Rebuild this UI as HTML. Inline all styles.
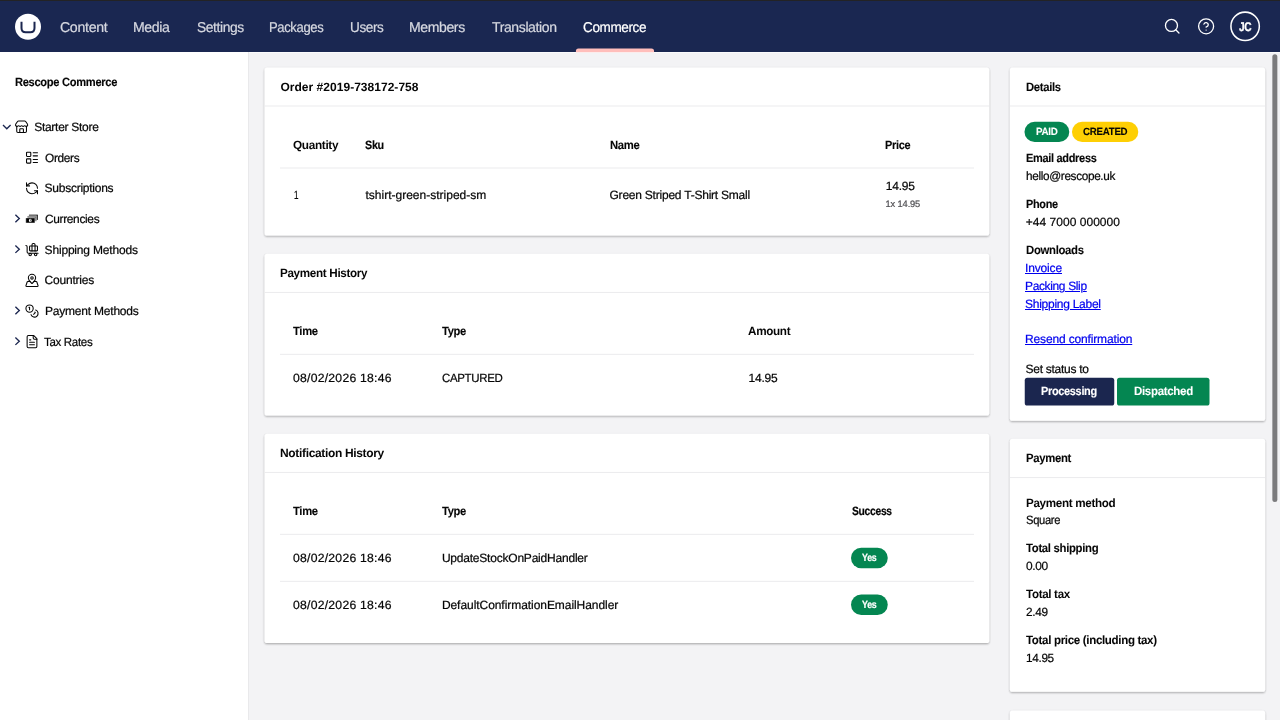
<!DOCTYPE html>
<html lang="en">
<head>
<meta charset="utf-8">
<title>Order #2019-738172-758 - Rescope Commerce</title>
<style>
*{box-sizing:border-box;margin:0;padding:0}
html,body{width:1280px;height:720px;overflow:hidden;background:#f3f3f5;font-family:"Liberation Sans",sans-serif;color:#060606}
body{position:relative}
.t{position:absolute;transform-origin:0 50%;white-space:nowrap;line-height:20px;height:20px;font-size:12px;color:#060606;text-decoration:none}
.abs{position:absolute}
#topline{left:0;top:0;width:1280px;height:1px;background:#232325}
#header{left:0;top:1px;width:1280px;height:51px;background:#1a2751}
#sidebar{left:0;top:52px;width:249px;height:668px;background:#fff;border-right:1px solid #e9e9eb}
.ic{fill:none;stroke-linecap:round;stroke-linejoin:round}
.chev{fill:none;stroke:#1b264f;stroke-width:1.35;stroke-linecap:butt;stroke-linejoin:miter}
</style>
</head>
<body>
<div id="topline" class="abs"></div>
<header id="header" class="abs"></header>
<div class="abs" style="left:249px;top:52px;width:1031px;height:1px;background:#fbfbfc"></div>
<aside id="sidebar" class="abs"></aside>
<svg id="icons" class="abs" style="left:0;top:0" width="1280" height="720" viewBox="0 0 1280 720">
<path class="chev" d="M3.00 125.10L6.80 128.80L10.60 125.10"/>
<g class="ic" transform="translate(14.30 119.70) scale(0.6083)" stroke="#060606" stroke-width="1.75"><path d="M15 21v-5a1 1 0 0 0-1-1h-4a1 1 0 0 0-1 1v5"/><path d="M17.774 10.31a1.12 1.12 0 0 0-1.549 0 2.5 2.5 0 0 1-3.451 0 1.12 1.12 0 0 0-1.548 0 2.5 2.5 0 0 1-3.452 0 1.12 1.12 0 0 0-1.549 0 2.5 2.5 0 0 1-3.77-3.248l2.889-4.184A2 2 0 0 1 7 2h10a2 2 0 0 1 1.653.873l2.895 4.192a2.5 2.5 0 0 1-3.774 3.244"/><path d="M4 10.95V19a2 2 0 0 0 2 2h12a2 2 0 0 0 2-2v-8.05"/></g>
<g class="ic" transform="translate(24.70 150.37) scale(0.6083)" stroke="#060606" stroke-width="1.75"><rect width="7" height="7" x="3" y="3" rx="1"/><rect width="7" height="7" x="3" y="14" rx="1"/><path d="M14 4h7"/><path d="M14 9h7"/><path d="M14 15h7"/><path d="M14 20h7"/></g>
<g class="ic" transform="translate(24.70 181.03) scale(0.6083)" stroke="#060606" stroke-width="1.75"><path d="M21 12a9 9 0 0 0-9-9 9.75 9.75 0 0 0-6.74 2.74L3 8"/><path d="M3 3v5h5"/><path d="M3 12a9 9 0 0 0 9 9 9.75 9.75 0 0 0 6.74-2.74L21 16"/><path d="M16 16h5v5"/></g>
<g>
<rect x="28.9" y="214.50" width="9.1" height="5.3" rx=".5" fill="#5e5e5e"/>
<rect x="36.7" y="215.10" width="1.3" height="4.7" fill="#2e2e2e"/>
<rect x="27.3" y="216.10" width="9.4" height="5.2" rx=".5" fill="#777" stroke="#fff" stroke-width=".3"/>
<rect x="25.8" y="217.90" width="9.1" height="5.0" rx=".4" fill="#000" stroke="#fff" stroke-width=".4"/>
<ellipse cx="30.3" cy="220.40" rx="1.35" ry="1.6" fill="#fff"/>
<rect x="30.05" y="219.30" width=".5" height="2.2" fill="#000"/>
</g>
<path class="chev" d="M15.40 214.80L19.30 218.50L15.40 222.20"/>
<g class="ic" transform="translate(24.70 242.37) scale(0.6083)" stroke="#060606" stroke-width="1.75"><path d="M22 18H6a2 2 0 0 1-2-2V7a2 2 0 0 0-2-2"/><path d="M17 14V4a2 2 0 0 0-2-2h-1a2 2 0 0 0-2 2v10"/><rect width="13" height="8" x="8" y="6" rx="1"/><circle cx="18" cy="20" r="2"/><circle cx="9" cy="20" r="2"/></g>
<path class="chev" d="M15.40 245.47L19.30 249.17L15.40 252.87"/>
<g class="ic" transform="translate(24.70 273.04) scale(0.6083)" stroke="#060606" stroke-width="1.75"><path d="M18 8c0 3.613-3.869 7.429-5.393 8.795a1 1 0 0 1-1.214 0C9.87 15.429 6 11.613 6 8a6 6 0 0 1 12 0"/><circle cx="12" cy="8" r="2"/><path d="M8.714 14h-3.71a1 1 0 0 0-.948.683l-2.004 6A1 1 0 0 0 3 22h18a1 1 0 0 0 .948-1.316l-2-6a1 1 0 0 0-.949-.684h-3.712"/></g>
<g class="ic" transform="translate(24.70 303.70) scale(0.6083)" stroke="#060606" stroke-width="1.75"><circle cx="8" cy="8" r="6"/><path d="M18.09 10.37A6 6 0 1 1 10.34 18"/><path d="M7 6h1v4"/><path d="m16.71 13.88.7.71-2.82 2.82"/></g>
<path class="chev" d="M15.40 306.80L19.30 310.50L15.40 314.20"/>
<g class="ic" transform="translate(24.70 334.37) scale(0.6083)" stroke="#060606" stroke-width="1.75"><path d="M15 2H6a2 2 0 0 0-2 2v16a2 2 0 0 0 2 2h12a2 2 0 0 0 2-2V7Z"/><path d="M14 2v4a2 2 0 0 0 2 2h4"/><path d="M10 9H8"/><path d="M16 13H8"/><path d="M16 17H8"/></g>
<path class="chev" d="M15.40 337.47L19.30 341.17L15.40 344.87"/>
<circle cx="28" cy="26.7" r="13" fill="#fff"/><path d="M21.5 21.75V28Q21.5 32.25 25.7 32.25H30.3Q34.5 32.25 34.5 28V21.75" fill="none" stroke="#1b264f" stroke-width="2"/>
<path d="M575.9 52.2V51a2.55 2.55 0 0 1 2.55-2.55h73.05a2.55 2.55 0 0 1 2.55 2.55v1.2z" fill="#ffbebb"/>
<g class="ic" transform="translate(1163.21 17.21) scale(0.7500)" stroke="#fff" stroke-width="1.75"><circle cx="11" cy="11" r="8"/><path d="m21 21-4.3-4.3"/></g>
<g class="ic" transform="translate(1197.10 17.35) scale(0.7500)" stroke="#fff" stroke-width="1.75"><circle cx="12" cy="12" r="10"/><path d="M9.09 9a3 3 0 0 1 5.83 1c0 2-3 3-3 3"/><path d="M12 17h.01"/></g>
<circle cx="1245.13" cy="26.3" r="14.2" fill="none" stroke="#fff" stroke-width="1.55"/>
</svg>

<main>
<svg id="boxes" class="abs" style="left:0;top:0" width="1280" height="720" viewBox="0 0 1280 720">
<defs><filter id="sh" x="-2%" y="-5%" width="104%" height="112%">
<feGaussianBlur in="SourceAlpha" stdDeviation="1.2" result="b1"/><feOffset in="b1" dy=".85" result="o1"/><feComponentTransfer in="o1" result="s1"><feFuncA type="linear" slope=".12"/></feComponentTransfer>
<feGaussianBlur in="SourceAlpha" stdDeviation=".8" result="b2"/><feOffset in="b2" dy=".85" result="o2"/><feComponentTransfer in="o2" result="s2"><feFuncA type="linear" slope=".24"/></feComponentTransfer>
<feMerge><feMergeNode in="s1"/><feMergeNode in="s2"/><feMergeNode in="SourceGraphic"/></feMerge></filter></defs>
<rect x="264.6" y="67.5" width="724.60" height="168.00" rx="2.6" fill="#fff" filter="url(#sh)"/>
<rect x="264.6" y="105.55" width="724.60" height="0.9" fill="#e9e9eb"/>
<rect x="280" y="167.55" width="694.00" height="0.9" fill="#e9e9eb"/>
<rect x="264.6" y="253.8" width="724.60" height="161.80" rx="2.6" fill="#fff" filter="url(#sh)"/>
<rect x="264.6" y="291.95" width="724.60" height="0.9" fill="#e9e9eb"/>
<rect x="280" y="353.85" width="694.00" height="0.9" fill="#e9e9eb"/>
<rect x="264.6" y="433.8" width="724.60" height="209.20" rx="2.6" fill="#fff" filter="url(#sh)"/>
<rect x="264.6" y="471.95" width="724.60" height="0.9" fill="#e9e9eb"/>
<rect x="280" y="533.85" width="694.00" height="0.9" fill="#e9e9eb"/>
<rect x="280" y="580.85" width="694.00" height="0.9" fill="#e9e9eb"/>
<rect x="851" y="547.75" width="36.75" height="20.50" rx="10.25" fill="#048651"/>
<rect x="851" y="594.5" width="36.75" height="20.50" rx="10.25" fill="#048651"/>
<rect x="1009.9" y="67.5" width="255.20" height="353.25" rx="2.6" fill="#fff" filter="url(#sh)"/>
<rect x="1009.9" y="105.55" width="255.20" height="0.9" fill="#e9e9eb"/>
<rect x="1024.5" y="121.75" width="44.75" height="20.25" rx="10.12" fill="#048651"/>
<rect x="1072" y="121.75" width="66.25" height="20.25" rx="10.12" fill="#fecf04"/>
<rect x="1024.75" y="377.75" width="89.50" height="27.75" rx="2.6" fill="#1b264f"/>
<rect x="1117" y="377.75" width="92.50" height="27.75" rx="2.6" fill="#048651"/>
<rect x="1009.9" y="438.75" width="255.20" height="253.00" rx="2.6" fill="#fff" filter="url(#sh)"/>
<rect x="1009.9" y="477.15" width="255.20" height="0.9" fill="#e9e9eb"/>
<rect x="1009.9" y="710.5" width="255.20" height="49.50" rx="2.6" fill="#fff" filter="url(#sh)"/>
<rect x="1272.35" y="54.2" width="5.0" height="447.7" rx="2.5" fill="#7b7b7d"/>
</svg>
</main>
<div id="txt" style="position:absolute;left:0;top:0;width:1280px;height:720px;will-change:transform;text-rendering:geometricPrecision">
<nav aria-label="Sections">
<span class="t" style="left:59.90px;top:18px;font-size:14.2px;letter-spacing:-0.308px;-webkit-text-stroke:.22px;color:#d6d8e0;">Content</span>
<span class="t" style="left:133.41px;top:18px;font-size:14.2px;letter-spacing:-0.398px;-webkit-text-stroke:.22px;color:#d6d8e0;transform:scaleX(0.9928);">Media</span>
<span class="t" style="left:196.70px;top:18px;font-size:14.2px;letter-spacing:-0.398px;-webkit-text-stroke:.22px;color:#d6d8e0;transform:scaleX(0.9734);">Settings</span>
<span class="t" style="left:269.48px;top:18px;font-size:14.2px;letter-spacing:-0.398px;-webkit-text-stroke:.22px;color:#d6d8e0;transform:scaleX(0.9191);">Packages</span>
<span class="t" style="left:349.75px;top:18px;font-size:14.2px;letter-spacing:-0.398px;-webkit-text-stroke:.22px;color:#d6d8e0;transform:scaleX(0.9545);">Users</span>
<span class="t" style="left:409.41px;top:18px;font-size:14.2px;letter-spacing:-0.398px;-webkit-text-stroke:.22px;color:#d6d8e0;transform:scaleX(0.9902);">Members</span>
<span class="t" style="left:492.20px;top:18px;font-size:14.2px;letter-spacing:-0.398px;-webkit-text-stroke:.22px;color:#d6d8e0;transform:scaleX(0.9894);">Translation</span>
<span class="t" style="left:582.70px;top:18px;font-size:14.2px;letter-spacing:-0.398px;-webkit-text-stroke:.22px;color:#ffffff;transform:scaleX(0.9535);">Commerce</span>
<span class="t" style="left:1238.90px;top:17px;font-size:12.6px;letter-spacing:-0.353px;font-weight:700;-webkit-text-stroke:0.29px;color:#ffffff;transform:scaleX(0.8050);">JC</span>
</nav>
<aside aria-label="Rescope Commerce tree">
<span class="t" style="left:15.20px;top:72px;letter-spacing:-0.336px;font-weight:700;-webkit-text-stroke:0.11px;transform:scaleX(0.9280);">Rescope Commerce</span>
<span class="t" style="left:34.20px;top:117px;letter-spacing:-0.279px;-webkit-text-stroke:.22px;">Starter Store</span>
<span class="t" style="left:44.60px;top:148px;letter-spacing:-0.336px;-webkit-text-stroke:.22px;transform:scaleX(0.9887);">Orders</span>
<span class="t" style="left:44.60px;top:178px;letter-spacing:-0.257px;-webkit-text-stroke:.22px;">Subscriptions</span>
<span class="t" style="left:44.60px;top:209px;letter-spacing:-0.336px;-webkit-text-stroke:.22px;transform:scaleX(0.9928);">Currencies</span>
<span class="t" style="left:44.60px;top:240px;letter-spacing:-0.184px;-webkit-text-stroke:.22px;">Shipping Methods</span>
<span class="t" style="left:44.60px;top:270px;letter-spacing:-0.220px;-webkit-text-stroke:.22px;">Countries</span>
<span class="t" style="left:44.95px;top:301px;letter-spacing:-0.205px;-webkit-text-stroke:.22px;">Payment Methods</span>
<span class="t" style="left:44.20px;top:332px;letter-spacing:-0.336px;-webkit-text-stroke:.22px;transform:scaleX(0.9612);">Tax Rates</span>
</aside>
<section aria-label="Order lines">
<span class="t" style="left:280.45px;top:77px;letter-spacing:0.028px;font-weight:700;">Order #2019-738172-758</span>
<span class="t" style="left:292.95px;top:135px;letter-spacing:-0.336px;font-weight:700;transform:scaleX(0.9830);">Quantity</span>
<span class="t" style="left:365.45px;top:135px;letter-spacing:-0.336px;font-weight:700;-webkit-text-stroke:0.15px;transform:scaleX(0.8974);">Sku</span>
<span class="t" style="left:609.50px;top:135px;letter-spacing:-0.336px;font-weight:700;-webkit-text-stroke:0.09px;transform:scaleX(0.9406);">Name</span>
<span class="t" style="left:885.40px;top:135px;letter-spacing:-0.336px;font-weight:700;-webkit-text-stroke:0.13px;transform:scaleX(0.9104);">Price</span>
<span class="t" style="left:293.60px;top:185px;letter-spacing:0.000px;-webkit-text-stroke:.22px;transform:scaleX(0.6714);">1</span>
<span class="t" style="left:365.45px;top:185px;letter-spacing:0.007px;-webkit-text-stroke:.22px;">tshirt-green-striped-sm</span>
<span class="t" style="left:609.50px;top:185px;letter-spacing:-0.224px;-webkit-text-stroke:.22px;">Green Striped T-Shirt Small</span>
<span class="t" style="left:885.80px;top:176px;letter-spacing:-0.239px;-webkit-text-stroke:.22px;">14.95</span>
<span class="t" style="left:885.60px;top:194px;font-size:9.3px;letter-spacing:-0.142px;-webkit-text-stroke:.22px;color:#515054;">1x 14.95</span>
</section>
<section aria-label="Payment History">
<span class="t" style="left:280.45px;top:263px;letter-spacing:-0.336px;font-weight:700;transform:scaleX(0.9726);">Payment History</span>
<span class="t" style="left:292.95px;top:321px;letter-spacing:-0.336px;font-weight:700;-webkit-text-stroke:0.10px;transform:scaleX(0.9351);">Time</span>
<span class="t" style="left:441.70px;top:321px;letter-spacing:-0.336px;font-weight:700;-webkit-text-stroke:0.10px;transform:scaleX(0.9306);">Type</span>
<span class="t" style="left:747.95px;top:321px;letter-spacing:-0.336px;font-weight:700;transform:scaleX(0.9760);">Amount</span>
<span class="t" style="left:292.95px;top:368px;letter-spacing:0.240px;-webkit-text-stroke:.22px;transform:scaleX(1.0154);">08/02/2026 18:46</span>
<span class="t" style="left:441.90px;top:368px;letter-spacing:-0.336px;-webkit-text-stroke:.22px;transform:scaleX(0.9557);">CAPTURED</span>
<span class="t" style="left:748.60px;top:368px;letter-spacing:-0.226px;-webkit-text-stroke:.22px;">14.95</span>
</section>
<section aria-label="Notification History">
<span class="t" style="left:280.45px;top:443px;letter-spacing:-0.336px;font-weight:700;transform:scaleX(0.9999);">Notification History</span>
<span class="t" style="left:292.95px;top:501px;letter-spacing:-0.336px;font-weight:700;-webkit-text-stroke:0.10px;transform:scaleX(0.9351);">Time</span>
<span class="t" style="left:441.70px;top:501px;letter-spacing:-0.336px;font-weight:700;-webkit-text-stroke:0.10px;transform:scaleX(0.9306);">Type</span>
<span class="t" style="left:851.70px;top:501px;letter-spacing:-0.336px;font-weight:700;-webkit-text-stroke:0.21px;transform:scaleX(0.8583);">Success</span>
<span class="t" style="left:292.95px;top:548px;letter-spacing:0.240px;-webkit-text-stroke:.22px;transform:scaleX(1.0154);">08/02/2026 18:46</span>
<span class="t" style="left:441.90px;top:548px;letter-spacing:-0.211px;-webkit-text-stroke:.22px;">UpdateStockOnPaidHandler</span>
<span class="t" style="left:292.95px;top:595px;letter-spacing:0.240px;-webkit-text-stroke:.22px;transform:scaleX(1.0154);">08/02/2026 18:46</span>
<span class="t" style="left:441.90px;top:595px;letter-spacing:-0.056px;-webkit-text-stroke:.22px;">DefaultConfirmationEmailHandler</span>
<span class="t" style="left:862.20px;top:549px;font-size:10.4px;letter-spacing:-0.291px;font-weight:700;-webkit-text-stroke:0.23px;color:#ffffff;transform:scaleX(0.8460);">Yes</span>
<span class="t" style="left:862.20px;top:596px;font-size:10.4px;letter-spacing:-0.291px;font-weight:700;-webkit-text-stroke:0.23px;color:#ffffff;transform:scaleX(0.8460);">Yes</span>
</section>
<section aria-label="Details">
<span class="t" style="left:1025.70px;top:77px;letter-spacing:-0.336px;font-weight:700;-webkit-text-stroke:0.09px;transform:scaleX(0.9386);">Details</span>
<span class="t" style="left:1035.70px;top:123px;font-size:10.4px;letter-spacing:-0.291px;font-weight:700;-webkit-text-stroke:0.08px;color:#ffffff;transform:scaleX(0.9440);">PAID</span>
<span class="t" style="left:1082.70px;top:123px;font-size:10.4px;letter-spacing:-0.291px;font-weight:700;-webkit-text-stroke:0.10px;transform:scaleX(0.9357);">CREATED</span>
<span class="t" style="left:1025.70px;top:148px;letter-spacing:-0.336px;font-weight:700;-webkit-text-stroke:0.13px;transform:scaleX(0.9154);">Email address</span>
<span class="t" style="left:1025.70px;top:166px;letter-spacing:-0.336px;-webkit-text-stroke:.22px;transform:scaleX(0.9800);">hello@rescope.uk</span>
<span class="t" style="left:1025.70px;top:194px;letter-spacing:-0.336px;font-weight:700;-webkit-text-stroke:0.14px;transform:scaleX(0.9074);">Phone</span>
<span class="t" style="left:1025.70px;top:212px;letter-spacing:0.037px;-webkit-text-stroke:.22px;">+44 7000 000000</span>
<span class="t" style="left:1025.70px;top:240px;letter-spacing:-0.336px;font-weight:700;-webkit-text-stroke:0.08px;transform:scaleX(0.9466);">Downloads</span>
<a href="#" class="t" style="left:1025.00px;top:258px;letter-spacing:-0.146px;-webkit-text-stroke:.22px;color:#0000ee;text-decoration:underline;">Invoice</a>
<a href="#" class="t" style="left:1025.00px;top:276px;letter-spacing:-0.336px;-webkit-text-stroke:.22px;color:#0000ee;transform:scaleX(0.9959);text-decoration:underline;">Packing Slip</a>
<a href="#" class="t" style="left:1025.00px;top:294px;letter-spacing:-0.261px;-webkit-text-stroke:.22px;color:#0000ee;text-decoration:underline;">Shipping Label</a>
<a href="#" class="t" style="left:1025.00px;top:329px;letter-spacing:-0.148px;-webkit-text-stroke:.22px;color:#0000ee;text-decoration:underline;">Resend confirmation</a>
<span class="t" style="left:1025.50px;top:359px;letter-spacing:-0.269px;-webkit-text-stroke:.22px;">Set status to</span>
<span class="t" style="left:1041.45px;top:381px;letter-spacing:-0.336px;font-weight:700;-webkit-text-stroke:0.13px;color:#ffffff;transform:scaleX(0.9105);">Processing</span>
<span class="t" style="left:1133.95px;top:381px;letter-spacing:-0.336px;font-weight:700;-webkit-text-stroke:0.06px;color:#ffffff;transform:scaleX(0.9596);">Dispatched</span>
</section>
<section aria-label="Payment">
<span class="t" style="left:1025.70px;top:448px;letter-spacing:-0.336px;font-weight:700;-webkit-text-stroke:0.08px;transform:scaleX(0.9446);">Payment</span>
<span class="t" style="left:1025.70px;top:493px;letter-spacing:-0.336px;font-weight:700;transform:scaleX(0.9713);">Payment method</span>
<span class="t" style="left:1025.50px;top:510px;letter-spacing:-0.336px;-webkit-text-stroke:.22px;transform:scaleX(0.9319);">Square</span>
<span class="t" style="left:1025.50px;top:538px;letter-spacing:-0.336px;font-weight:700;-webkit-text-stroke:0.08px;transform:scaleX(0.9463);">Total shipping</span>
<span class="t" style="left:1025.50px;top:556px;letter-spacing:-0.336px;-webkit-text-stroke:.22px;transform:scaleX(0.9945);">0.00</span>
<span class="t" style="left:1025.50px;top:584px;letter-spacing:-0.336px;font-weight:700;transform:scaleX(0.9666);">Total tax</span>
<span class="t" style="left:1025.50px;top:602px;letter-spacing:-0.336px;-webkit-text-stroke:.22px;transform:scaleX(0.9835);">2.49</span>
<span class="t" style="left:1025.50px;top:630px;letter-spacing:-0.336px;font-weight:700;-webkit-text-stroke:0.06px;transform:scaleX(0.9609);">Total price (including tax)</span>
<span class="t" style="left:1025.80px;top:648px;letter-spacing:-0.336px;-webkit-text-stroke:.22px;transform:scaleX(0.9824);">14.95</span>
</section>
</div>
</body>
</html>
